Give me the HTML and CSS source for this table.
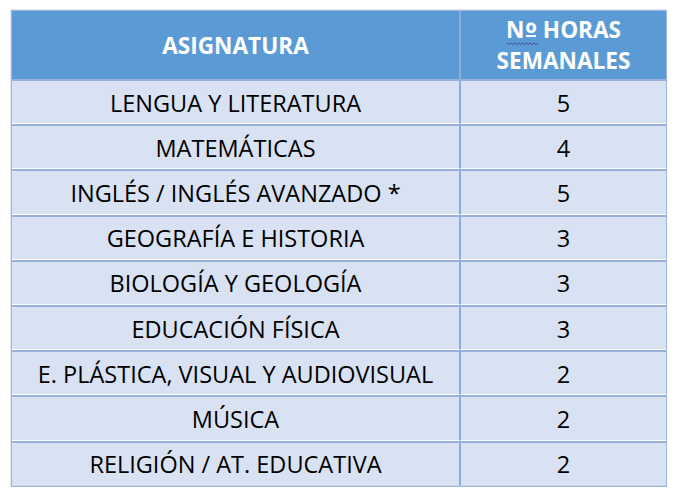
FILE: index.html
```html
<!DOCTYPE html>
<html lang="es">
<head>
<meta charset="utf-8">
<title>Asignaturas</title>
<link rel="stylesheet" href="styles.css">
</head>
<body>
<table class="horario">
  <thead>
    <tr>
      <th class="col-asig">ASIGNATURA</th>
      <th class="col-horas"><span class="spell">N<span class="ord">º</span><svg class="squiggle" viewBox="0 0 32 4" preserveAspectRatio="none" aria-hidden="true"><path d="M0 1 L2 3 L4 1 L6 3 L8 1 L10 3 L12 1 L14 3 L16 1 L18 3 L20 1 L22 3 L24 1 L26 3 L28 1 L30 3 L32 1" fill="none" stroke="#4a3d8f" stroke-width="1"/></svg></span> HORAS<br>SEMANALES</th>
    </tr>
  </thead>
  <tbody>
    <tr><td>LENGUA Y LITERATURA</td><td>5</td></tr>
    <tr><td>MATEMÁTICAS</td><td>4</td></tr>
    <tr><td>INGLÉS / INGLÉS AVANZADO *</td><td>5</td></tr>
    <tr><td>GEOGRAFÍA E HISTORIA</td><td>3</td></tr>
    <tr><td>BIOLOGÍA Y GEOLOGÍA</td><td>3</td></tr>
    <tr><td>EDUCACIÓN FÍSICA</td><td>3</td></tr>
    <tr><td>E. PLÁSTICA, VISUAL Y AUDIOVISUAL</td><td>2</td></tr>
    <tr><td>MÚSICA</td><td>2</td></tr>
    <tr><td>RELIGIÓN / AT. EDUCATIVA</td><td>2</td></tr>
  </tbody>
</table>
</body>
</html>
```
FILE: styles.css
```css
html, body {
  margin: 0;
  padding: 0;
  background: #ffffff;
}
body {
  padding: 10px 0 0 11px;
  font-family: "Open Sans", "Liberation Sans", sans-serif;
}
.horario {
  border-collapse: separate;
  border-spacing: 0;
  width: 656px;
  border: 1px solid #9db4df;
  box-shadow: -1px -1px 0 #e6e9ef;
}
.horario th {
  background: #5b9bd5;
  color: #ffffff;
  font-weight: 700;
  font-size: 22.6px;
  line-height: 31px;
  height: 68px;
  padding: 0;
  text-align: center;
  vertical-align: middle;
}
.col-asig {
  width: 447px;
  border-right: 2px solid #8eaadb;
}
.horario td {
  background: #d9e2f3;
  color: #000000;
  font-size: 23.5px;
  height: 41.2px;
  padding: 1px 0 0;
  text-align: center;
  vertical-align: middle;
  border-top: 2px solid #97b0dc;
  border-bottom: 1px solid #ffffff;
}
.horario td:first-child {
  border-right: 2px solid #8eaadb;
}
.horario tbody tr:last-child td {
  border-bottom: 1px solid #c9d6ee;
}
.spell {
  position: relative;
}
.ord {
  position: relative;
  font-size: 30px;
  line-height: 0;
  vertical-align: -6px;
  margin-left: 1px;
}
.ord::after {
  content: "";
  position: absolute;
  left: 1px;
  right: 1px;
  bottom: 16.4px;
  height: 2px;
  background: #ffffff;
}
.squiggle {
  position: absolute;
  left: 1px;
  bottom: 0;
  width: 31px;
  height: 3.5px;
}
```
